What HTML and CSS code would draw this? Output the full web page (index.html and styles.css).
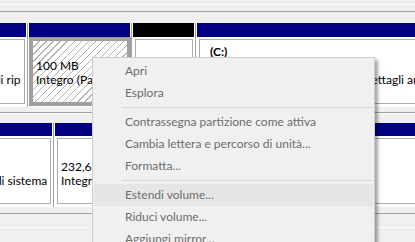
FILE: index.html
```html
<!DOCTYPE html>
<html lang="it">
<head>
<meta charset="utf-8">
<title>Gestione disco</title>
<link rel="stylesheet" href="styles.css">
</head>
<body>
<div class="screen">
  <div class="gap gap-top"></div>
  <div class="disk disk-1">
    <div class="part r1c1">
      <div class="hdr"></div>
      <div class="cell"><div class="box"><div class="txt">
        <div class="ln">&nbsp;</div>
        <div class="ln">450 MB NTFS</div>
        <div class="ln">Integro (Partizione di ripristino)</div>
      </div></div></div>
    </div>
    <div class="part r1c2">
      <div class="hdr"></div>
      <div class="cell sel"><div class="box hatch"><div class="txt">
        <div class="ln">&nbsp;</div>
        <div class="ln">100 MB</div>
        <div class="ln">Integro (Partizione di sistema EFI)</div>
      </div></div></div>
    </div>
    <div class="part r1c3">
      <div class="hdr black"></div>
      <div class="cell"><div class="box"><div class="txt">
        <div class="ln">&nbsp;</div>
      </div></div></div>
    </div>
    <div class="part r1c4">
      <div class="hdr"></div>
      <div class="cell"><div class="box"><div class="txt">
        <div class="ln label">(C:)</div>
        <div class="ln">465,21 GB NTFS</div>
        <div class="ln status">Integro (Avvio, File di paging, Dettagli arresto anomalo, Partizione primaria)</div>
      </div></div></div>
    </div>
  </div>
  <div class="gap gap-mid"></div>
  <div class="disk disk-2">
    <div class="part r2c1">
      <div class="hdr"></div>
      <div class="cell"><div class="box"><div class="txt">
        <div class="ln">&nbsp;</div>
        <div class="ln">500 MB NTFS</div>
        <div class="ln">Integro (Partizione di sistema)</div>
      </div></div></div>
    </div>
    <div class="part r2c2">
      <div class="hdr"></div>
      <div class="cell"><div class="box"><div class="txt">
        <div class="ln">&nbsp;</div>
        <div class="ln">232,66 GB NTFS</div>
        <div class="ln">Integro (Partizione primaria)</div>
      </div></div></div>
    </div>
  </div>
  <div class="gap gap-bot"></div>
</div>

<div class="menu">
  <div class="item">Apri</div>
  <div class="item">Esplora</div>
  <div class="sep"></div>
  <div class="item">Contrassegna partizione come attiva</div>
  <div class="item">Cambia lettera e percorso di unità...</div>
  <div class="item">Formatta...</div>
  <div class="sep"></div>
  <div class="item hl">Estendi volume...</div>
  <div class="item">Riduci volume...</div>
  <div class="item">Aggiungi mirror...</div>
  <div class="item">Elimina volume...</div>
</div>
</body>
</html>
```

FILE: styles.css
```css
html, body {
  margin: 0;
  padding: 0;
}
body {
  width: 415px;
  height: 242px;
  overflow: hidden;
  position: relative;
  background: #f0f0f0;
  font-family: Lato, "Open Sans", "Liberation Sans", sans-serif;
  font-size: 12px;
}
.screen {
  width: 700px;
}
.gap-top {
  height: 23px;
  background: linear-gradient(to bottom, #f0f0f0 0 4px, #fbfbfb 4px 5px, #f0f0f0 5px 11px, #a0a0a0 11px 12px, #f0f0f0 12px);
}
.gap-mid {
  height: 16px;
  background: linear-gradient(to bottom, #f0f0f0 0 5px, #a0a0a0 5px 6px, #fbfbfb 6px 7px, #f0f0f0 7px);
}
.gap-bot {
  height: 30px;
  background: linear-gradient(to bottom, #f0f0f0 0 6px, #a0a0a0 6px 7px, #f0f0f0 7px 20px, #fbfbfb 20px 21px, #f0f0f0 21px);
}
.disk {
  display: flex;
  height: 84px;
}
.disk-1 {
  margin-left: -113px;
}
.disk-2 {
  margin-left: -112px;
}
.part {
  display: flex;
  flex-direction: column;
  flex: none;
  background: #fff;
  border-right: 1px solid #a0a0a0;
}
.hdr {
  height: 14px;
  margin: 0 1px;
  background: #000080;
  flex: none;
}
.disk-2 .hdr {
  height: 13px;
}
.hdr.black {
  background: #000;
}
.cell {
  flex: 1;
  padding: 2px 2px 3px 3px;
  min-height: 0;
}
.cell.sel {
  padding: 0 0 1px 1px;
}
.box {
  height: 100%;
  box-sizing: border-box;
  border: 1px solid #acacac;
  overflow: hidden;
}
.cell.sel .box {
  border: 4px solid #a0a0a0;
}
.hatch {
  background: repeating-linear-gradient(135deg, #fff 0 4px, #b4b4b4 4px 5px);
}
.txt {
  padding: 5px 0 0 3px;
  margin-right: 3px;
  overflow: hidden;
  white-space: nowrap;
  color: #000;
  line-height: 14px;
}
.cell.sel .txt {
  padding-top: 4px;
}
.disk-2 .txt {
  padding-top: 7px;
}
.label {
  font-weight: bold;
  padding-left: 7px;
}
.status {
  padding-left: 5px;
}
.r1c1 { width: 140px; }
.r1c2 { width: 103px; }
.r1c3 { width: 63px; }
.r1c4 { flex: 1; }
.r2c1 { width: 165px; }
.r2c2 { flex: 1; }

.menu {
  position: absolute;
  left: 92px;
  top: 57px;
  width: 279px;
  padding: 2px 1px;
  border: 1px solid #cccccc;
  background: #f0f0f0;
  box-shadow: 3px 3px 3px rgba(0, 0, 0, 0.35);
}
.item {
  height: 22px;
  line-height: 22px;
  padding-left: 31px;
  color: #6d6d6d;
  white-space: nowrap;
}
.item.hl {
  background: #e6e6e6;
}
.sep {
  height: 1px;
  margin: 3px 0 3px 28px;
  background: #d7d7d7;
}
```
